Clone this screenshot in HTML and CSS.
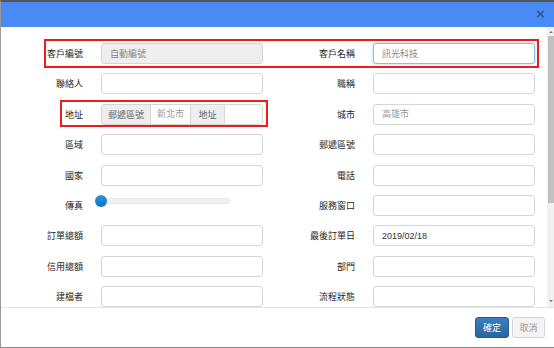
FILE: index.html
```html
<!DOCTYPE html>
<html lang="zh-Hant">
<head>
<meta charset="UTF-8">
<meta name="viewport" content="width=device-width, initial-scale=1.0">
<title>客戶資料</title>
<link rel="stylesheet" href="styles.css">
</head>
<body>

<div class="dialog">
<div class="dialog-head">
<span class="close">&times;</span>
</div>

<div class="dialog-main">
<div class="dialog-body">
<form class="form-grid">
<label class="lbl">客戶編號</label>
<input class="ctl" type="text" value="自動編號" disabled>
<label class="lbl">客戶名稱</label>
<input class="ctl focus" type="text" value="訊光科技">

<label class="lbl">聯絡人</label>
<input class="ctl" type="text">
<label class="lbl">職稱</label>
<input class="ctl" type="text">

<label class="lbl">地址</label>
<div class="input-group">
<span class="addon addon-zip">郵遞區號</span>
<input class="ctl ctl-city" type="text" placeholder="新北市">
<span class="addon addon-addr">地址</span>
<input class="ctl ctl-addr" type="text">
</div>
<label class="lbl">城市</label>
<input class="ctl" type="text" placeholder="高雄市">

<label class="lbl">區域</label>
<input class="ctl" type="text">
<label class="lbl">郵遞區號</label>
<input class="ctl" type="text">

<label class="lbl">國家</label>
<input class="ctl" type="text">
<label class="lbl">電話</label>
<input class="ctl" type="text">

<label class="lbl">傳真</label>
<div class="slider"><span class="slider-handle"></span></div>
<label class="lbl">服務窗口</label>
<input class="ctl" type="text">

<label class="lbl">訂單總額</label>
<input class="ctl" type="text">
<label class="lbl">最後訂單日</label>
<input class="ctl" type="text" value="2019/02/18">

<label class="lbl">信用總額</label>
<input class="ctl" type="text">
<label class="lbl">部門</label>
<input class="ctl" type="text">

<label class="lbl">建檔者</label>
<input class="ctl" type="text">
<label class="lbl">流程狀態</label>
<input class="ctl" type="text">
</form>
</div>

<div class="scrollbar">
<span class="sb-arrow sb-up"></span>
<span class="sb-thumb"></span>
<span class="sb-arrow sb-down"></span>
</div>
</div>

<div class="dialog-foot">
<button class="btn btn-primary" type="button">確定</button>
<button class="btn btn-default" type="button">取消</button>
</div>

<!-- annotation boxes -->
<div class="mark mark-name"></div>
<div class="mark mark-addr"></div>
</div>

</body>
</html>
```

FILE: styles.css
```css
/* Basic Reset */
* {
margin: 0;
padding: 0;
box-sizing: border-box;
}

body {
background-color: #ffffff;
font-family: "Liberation Sans", "Noto Sans CJK TC", sans-serif;
font-size: 9px;
color: #333;
}

/* Dialog frame */
.dialog {
position: relative;
width: 554px;
height: 348px;
border-top: 2px solid #555;
border-left: 1px solid #9a9a9a;
border-bottom: 1px solid #8a8a8a;
display: flex;
flex-direction: column;
overflow: hidden;
}

.dialog-head {
height: 25px;
background-color: #4a8af4;
display: flex;
align-items: center;
justify-content: flex-end;
padding-right: 8px;
}

.close {
font-family: "DejaVu Sans", sans-serif;
font-size: 13px;
font-weight: bold;
line-height: 13px;
color: #2c5597;
margin-top: -3px;
}

.dialog-main {
height: 280px;
display: flex;
}

.dialog-body {
flex: 1;
overflow: hidden;
padding-top: 16px;
}

/* Form */
.form-grid {
display: grid;
grid-template-columns: 82px 162px 74px 162px;
grid-auto-rows: 21px;
column-gap: 18px;
row-gap: 9.375px;
}

.lbl {
align-self: center;
text-align: right;
white-space: nowrap;
color: #262626;
}

.ctl {
width: 100%;
height: 21px;
padding: 0 8px;
border: 1px solid #d6d6d6;
border-radius: 3px;
background-color: #fff;
font-family: inherit;
font-size: 9px;
color: #333;
outline: none;
}

.ctl::placeholder {
color: #999;
}

.ctl:disabled {
background-color: #eeeeee;
color: #888;
}

.ctl.focus {
border-color: #8bbde9;
box-shadow: 0 0 3px rgba(102, 175, 233, 0.6);
color: #888;
}

.input-group {
display: flex;
height: 21px;
}

.addon {
display: flex;
align-items: center;
justify-content: center;
background-color: #eeeeee;
border: 1px solid #d6d6d6;
color: #666;
white-space: nowrap;
}

.addon-zip {
width: 50px;
border-radius: 3px 0 0 3px;
}

.addon-addr {
width: 33px;
border-left: none;
border-right: none;
}

.input-group .ctl {
border-radius: 0;
padding: 0 6px;
}

.ctl-city {
width: 40px;
border-left: none;
}

.ctl-addr {
width: 39px;
border-radius: 0 3px 3px 0 !important;
}

/* Slider */
.slider {
position: relative;
width: 130px;
height: 6px;
margin: 3px 0 0 -1px;
background-color: #f0f0f0;
border: 1px solid #e8e8e8;
border-radius: 3px;
}

.slider-handle {
position: absolute;
left: -6px;
top: -4px;
width: 12px;
height: 12px;
border-radius: 50%;
background: linear-gradient(#2f95e0, #0f72c4);
}

/* Scrollbar */
.scrollbar {
width: 7px;
background-color: #f1f1f1;
display: flex;
flex-direction: column;
align-items: center;
padding: 3px 0 3px;
}

.sb-arrow {
width: 0;
height: 0;
border-left: 2px solid transparent;
border-right: 2px solid transparent;
}

.sb-up {
border-bottom: 2px solid #777;
margin-top: 1px;
}

.sb-down {
border-top: 2px solid #777;
margin-top: auto;
margin-bottom: 2px;
}

.sb-thumb {
width: 6px;
height: 167px;
margin-top: 3px;
background-color: #c1c1c1;
}

/* Footer */
.dialog-foot {
height: 40px;
border-top: 1px solid #e5e5e5;
display: flex;
justify-content: flex-end;
align-items: flex-start;
gap: 3px;
padding: 9px 9px 0 0;
}

.btn {
height: 21px;
padding: 0;
border-radius: 3px;
font-family: inherit;
font-size: 9px;
white-space: nowrap;
cursor: pointer;
}

.btn-primary {
width: 34px;
background: linear-gradient(#3a7fbd, #2a66a0);
border: 1px solid #25588c;
color: #fff;
}

.btn-default {
width: 33px;
background-color: #f4f4f4;
border: 1px solid #d4d4d4;
color: #999;
}

/* Red annotation boxes */
.mark {
position: absolute;
border: 2px solid #ec1c1c;
pointer-events: none;
}

.mark-name {
left: 43px;
top: 37px;
width: 495px;
height: 29px;
}

.mark-addr {
left: 59px;
top: 98px;
width: 208px;
height: 27px;
}
```
